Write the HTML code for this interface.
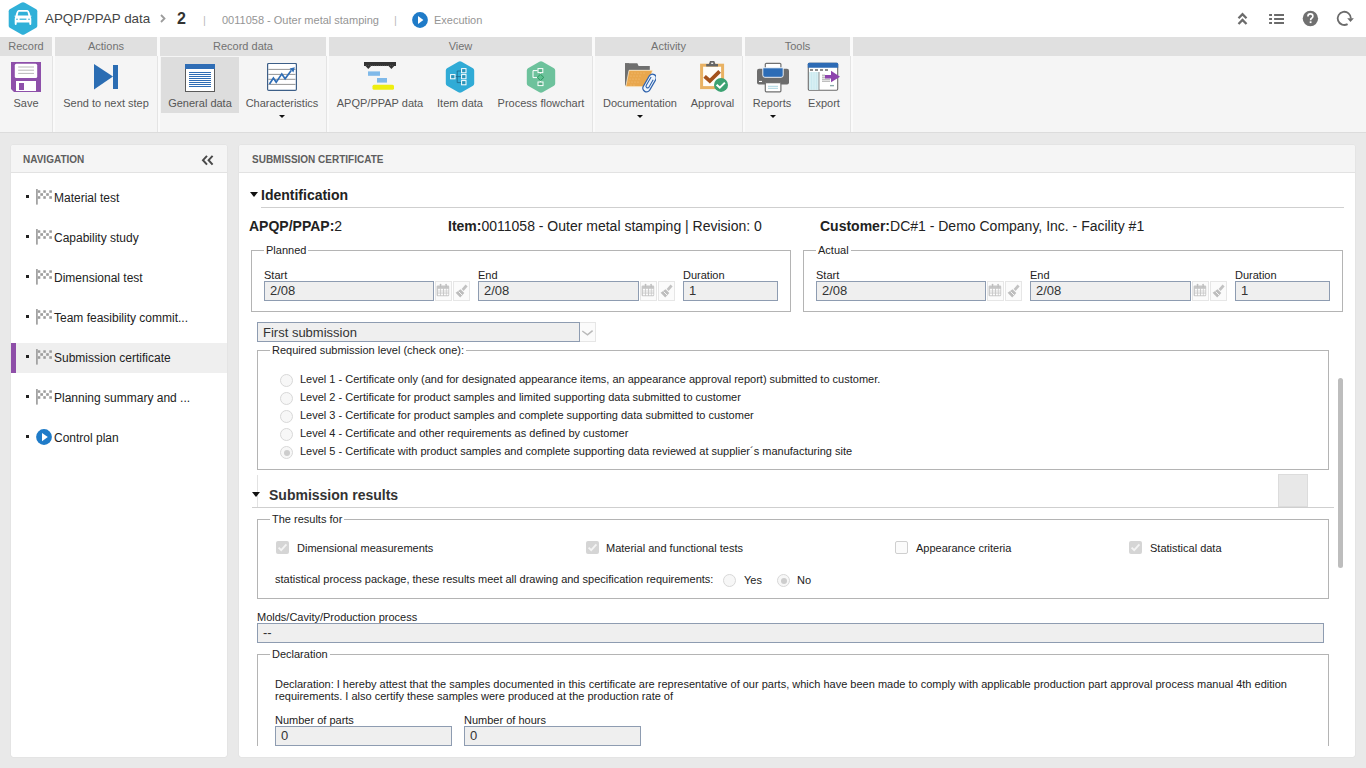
<!DOCTYPE html>
<html><head><meta charset="utf-8">
<style>
*{box-sizing:border-box;margin:0;padding:0}
html,body{width:1366px;height:768px;overflow:hidden}
body{background:#e9e9e9;font-family:"Liberation Sans",sans-serif;position:relative;color:#222}
.a{position:absolute;white-space:nowrap}
#hdr{left:0;top:0;width:1366px;height:37px;background:#fff}
#tb{left:0;top:37px;width:1366px;height:96px;background:#f5f5f5;border-bottom:1px solid #dcdcdc}
.gl{position:absolute;top:0;height:19px;background:#e0e0e0;color:#727272;font-size:11px;line-height:19px;text-align:center}
.gs{position:absolute;top:0;height:95px;width:3px;background:#fafafa}
.gs:after{content:"";position:absolute;left:0;top:19px;width:1px;height:76px;background:#e4e4e4}
.btn{position:absolute;top:19px;height:76px;text-align:center}
.btn .lb{position:absolute;left:0;right:0;top:40px;font-size:11px;line-height:14px;color:#555;text-align:center;white-space:nowrap}
.btn svg{position:absolute;top:6px}
.arr{position:absolute;top:59px;width:0;height:0;border-left:3px solid transparent;border-right:3px solid transparent;border-top:3px solid #222}
.panel{position:absolute;top:145px;height:612px;background:#fff;border-radius:2px;box-shadow:0 0 1px rgba(0,0,0,.2)}
.ph{position:absolute;left:0;top:0;right:0;height:28px;background:#f5f5f5;border-bottom:1px solid #e2e2e2;border-radius:2px 2px 0 0}
.pht{position:absolute;left:12px;top:1px;line-height:28px;font-size:10px;font-weight:bold;color:#5e5e5e}
.ni{position:absolute;left:0;width:216px;height:30px}
.ni .bu{position:absolute;left:15px;top:13px;width:3px;height:3px;background:#222}
.ni .t{position:absolute;left:43px;top:1px;line-height:30px;font-size:12px;color:#222}
.ni svg{position:absolute;left:25px;top:7px}
.ni span svg{position:static}
.fs{position:absolute;border:1px solid #b4b4b4}
.lg{position:absolute;top:-8px;background:#fff;padding:0 2px;font-size:11px;line-height:14px;color:#222}
.fl{position:absolute;font-size:11px;line-height:12px;color:#222}
.in{position:absolute;height:20px;background:#efefef;border:1px solid #8e9cb1;font-size:13px;line-height:18px;padding-left:5px;color:#333}
.ic{position:absolute;width:17px;height:20px;border:1px solid #e6e6e6;background:#fbfbfb}
.rd{position:absolute;width:13px;height:13px;border-radius:50%;border:1px solid #d8d8d8;background:#f7f7f7}
.rd.on:after{content:"";position:absolute;left:2.5px;top:2.5px;width:6px;height:6px;border-radius:50%;background:#cdcdcd}
.rt{position:absolute;font-size:11px;line-height:14px;color:#222}
.cb{position:absolute;width:13px;height:13px;background:#d5d5d5;border-radius:2px}
.cb svg{position:absolute;left:0;top:0}
</style></head><body>

<!-- HEADER -->
<div class="a" id="hdr">
  <div class="a" style="left:45px;top:10px;font-size:13.4px;line-height:18px;color:#444">APQP/PPAP data</div>
  <svg class="a" style="left:160px;top:14px" width="6" height="9" viewBox="0 0 6 9"><path d="M1 1L4.5 4.5L1 8" fill="none" stroke="#9c9c9c" stroke-width="1.8"/></svg>
  <div class="a" style="left:177px;top:9px;font-size:16px;line-height:20px;color:#333;font-weight:bold">2</div>
  <div class="a" style="left:203px;top:12px;font-size:11px;line-height:16px;color:#bbb">|</div>
  <div class="a" style="left:222px;top:12px;font-size:11px;line-height:16px;color:#959595">0011058 - Outer metal stamping</div>
  <div class="a" style="left:394px;top:12px;font-size:11px;line-height:16px;color:#bbb">|</div>
  <div class="a" style="left:434px;top:12px;font-size:11px;line-height:16px;color:#959595">Execution</div>
</div>

<!-- TOOLBAR -->
<div class="a" id="tb">
  <div class="gl" style="left:0;width:52px">Record</div>
  <div class="gl" style="left:55px;width:102px">Actions</div>
  <div class="gl" style="left:160px;width:166px">Record data</div>
  <div class="gl" style="left:329px;width:263px">View</div>
  <div class="gl" style="left:595px;width:147px">Activity</div>
  <div class="gl" style="left:745px;width:105px">Tools</div>
  <div class="gl" style="left:853px;width:513px"></div>
  <div class="gs" style="left:52px"></div>
  <div class="gs" style="left:157px"></div>
  <div class="gs" style="left:326px"></div>
  <div class="gs" style="left:592px"></div>
  <div class="gs" style="left:742px"></div>
  <div class="gs" style="left:850px"></div>
  <div class="btn" style="left:0;width:52px"><div class="lb">Save</div></div>
  <div class="btn" style="left:54px;width:104px"><div class="lb">Send to next step</div></div>
  <div class="btn" style="left:161px;width:78px;background:#dddddd;height:56px;top:20px"><div class="lb" style="top:39px">General data</div></div>
  <div class="btn" style="left:240px;width:84px"><div class="lb">Characteristics</div></div>
  <div class="btn" style="left:331px;width:98px"><div class="lb">APQP/PPAP data</div></div>
  <div class="btn" style="left:431px;width:58px"><div class="lb">Item data</div></div>
  <div class="btn" style="left:491px;width:100px"><div class="lb">Process flowchart</div></div>
  <div class="btn" style="left:597px;width:86px"><div class="lb">Documentation</div></div>
  <div class="btn" style="left:685px;width:55px"><div class="lb">Approval</div></div>
  <div class="btn" style="left:746px;width:52px"><div class="lb">Reports</div></div>
  <div class="btn" style="left:800px;width:48px"><div class="lb">Export</div></div>
</div>


<!-- TOOLBAR ICONS -->
<svg class="a" style="left:11px;top:62px" width="30" height="30" viewBox="0 0 30 30">
 <path d="M0 0H30V30H3L0 27Z" fill="#8e50aa"/>
 <rect x="3.8" y="1.8" width="22.4" height="14.2" rx="1.6" fill="#fff"/>
 <path d="M7.2 5H23M7.2 8.2H23M7.2 11.4H23" stroke="#a6a6a6" stroke-width="0.8"/>
 <rect x="5" y="19" width="20" height="10" fill="#fff"/>
 <rect x="8" y="21" width="5" height="7" fill="#8e50aa"/>
</svg>
<svg class="a" style="left:94px;top:64px" width="25" height="26" viewBox="0 0 25 26">
 <path d="M0 0L19 12.5L0 25.5Z" fill="#2b6db3"/><rect x="19" y="1" width="5" height="24" fill="#2b6db3"/>
</svg>
<svg class="a" style="left:185px;top:64px" width="30" height="28" viewBox="0 0 30 28" shape-rendering="crispEdges">
 <rect x="0.5" y="0.5" width="29" height="26.5" fill="#fff" stroke="#5b5b5b" stroke-width="1"/>
 <rect x="0" y="0" width="30" height="5" fill="#2f6db5"/>
 <path d="M4 8.5H26M4 10.5H26M4 12.5H26M4 14.5H26M4 16.5H26M4 18.5H26M4 20.5H26M4 22.5H26" stroke="#2f6db5" stroke-width="1"/>
</svg>
<svg class="a" style="left:267px;top:63px" width="30" height="28" viewBox="0 0 30 28">
 <rect x="0.6" y="0.4" width="28.8" height="27" rx="1.2" fill="#fff" stroke="#3d5f88" stroke-width="1.2"/>
 <path d="M1.3 6.4H28.5M1.3 11.4H28.5M1.3 16.3H28.5M1.3 21.4H28.5" stroke="#7a7a7a" stroke-width="0.8"/>
 <polyline points="2.5,21 6.4,15 9.2,19.3 14.8,10.9 18.1,15.7 24.2,7.4" fill="none" stroke="#2f6db5" stroke-width="1.7"/>
 <path d="M27.8 4.2L22.6 5.6L26.4 9.6Z" fill="#2f6db5"/>
</svg>
<svg class="a" style="left:363px;top:61px" width="34" height="31" viewBox="0 0 34 31">
 <path d="M1 1H33V5H31.2L28.4 8L25.6 5H8.1L5.3 8L2.5 5H1Z" fill="#333"/>
 <path d="M3 4.6H31" stroke="#666" stroke-width="0.6" stroke-dasharray="1 1"/>
 <rect x="5" y="10.4" width="12" height="4.4" fill="#7fb9e9"/>
 <rect x="14" y="17" width="10" height="4.6" fill="#7fb9e9"/>
 <rect x="9.5" y="23.7" width="21.5" height="5" rx="1.5" fill="#eeee10"/>
</svg>
<svg class="a" style="left:444px;top:60px" width="32" height="34" viewBox="0 0 32 34">
 <path d="M16 1.2Q16.8 1.2 17.6 1.7L29 8.3Q30.2 9 30.2 10.4V23.6Q30.2 25 29 25.7L17.6 32.3Q16 33.2 14.4 32.3L3 25.7Q1.8 25 1.8 23.6V10.4Q1.8 9 3 8.3L14.4 1.7Q15.2 1.2 16 1.2Z" fill="#30abd6"/>
 <path d="M11.2 16.6H13.2M13.2 11H17.2M13.2 11V22.6M13.2 16.6H17.2M13.2 22.6H17.2" stroke="#1f6d8e" stroke-width="0.9" fill="none"/>
 <rect x="6.6" y="14.6" width="4.4" height="4.2" fill="#2a93b8" stroke="#fff" stroke-width="1"/>
 <rect x="17.6" y="8.6" width="4.4" height="4.2" fill="#2a93b8" stroke="#fff" stroke-width="1"/>
 <rect x="17.6" y="14.6" width="4.4" height="4.2" fill="#2a93b8" stroke="#fff" stroke-width="1"/>
 <rect x="17.6" y="20.6" width="4.4" height="4.2" fill="#2a93b8" stroke="#fff" stroke-width="1"/>
</svg>
<svg class="a" style="left:525px;top:60px" width="32" height="34" viewBox="0 0 32 34">
 <path d="M16 1.2Q16.8 1.2 17.6 1.7L29 8.3Q30.2 9 30.2 10.4V23.6Q30.2 25 29 25.7L17.6 32.3Q16 33.2 14.4 32.3L3 25.7Q1.8 25 1.8 23.6V10.4Q1.8 9 3 8.3L14.4 1.7Q15.2 1.2 16 1.2Z" fill="#6dc29c"/>
 <rect x="13" y="8.6" width="4.8" height="4" fill="#5aae88" stroke="#fff" stroke-width="1"/>
 <path d="M12.5 10.6H8V17.6H13" stroke="#fff" stroke-width="1" fill="none"/>
 <path d="M15.5 12.6V14.2M15.5 20.6V22" stroke="#fff" stroke-width="1"/>
 <path d="M15.5 14.2L18.8 17.4L15.5 20.6L12.2 17.4Z" fill="#5cc08f" stroke="#2e9560" stroke-width="1"/>
 <rect x="13" y="22" width="5" height="3.6" fill="#5aae88" stroke="#fff" stroke-width="1"/>
</svg>
<svg class="a" style="left:624px;top:62px" width="32" height="31" viewBox="0 0 32 31">
 <path d="M1 1.2H13.3L14.6 4.1H25.8V8.3H1Z" fill="#6f6f6f"/>
 <path d="M1 1.2H5V24L1 23.6Z" fill="#6f6f6f"/>
 <path d="M5 8.3H28.6L23.7 24.7H1.8Z" fill="#e9a74d" stroke="#fdf3dc" stroke-width="0.7"/>
 <g fill="#f4c27c"><circle cx="8" cy="11" r="0.6"/><circle cx="11" cy="11" r="0.6"/><circle cx="14" cy="11" r="0.6"/><circle cx="17" cy="11" r="0.6"/><circle cx="20" cy="11" r="0.6"/><circle cx="7" cy="14" r="0.6"/><circle cx="10" cy="14" r="0.6"/><circle cx="13" cy="14" r="0.6"/><circle cx="16" cy="14" r="0.6"/><circle cx="6" cy="17" r="0.6"/><circle cx="9" cy="17" r="0.6"/><circle cx="12" cy="17" r="0.6"/><circle cx="15" cy="17" r="0.6"/><circle cx="5" cy="20" r="0.6"/><circle cx="8" cy="20" r="0.6"/><circle cx="11" cy="20" r="0.6"/><circle cx="14" cy="20" r="0.6"/><circle cx="7" cy="23" r="0.6"/><circle cx="10" cy="23" r="0.6"/></g>
 <g transform="rotate(30 25.5 21)"><rect x="21.8" y="11.4" width="7.4" height="19.2" rx="3.7" fill="#eef5fc" stroke="#2f62ac" stroke-width="1.3"/><path d="M23.9 15V24.6Q23.9 26.4 25.5 26.4Q27.1 26.4 27.1 24.6V16.4" fill="none" stroke="#2f62ac" stroke-width="1.1"/></g>
</svg>
<svg class="a" style="left:699px;top:60px" width="31" height="33" viewBox="0 0 31 33">
 <rect x="2.6" y="5.2" width="21" height="22.4" fill="#fffdf8" stroke="#e9b263" stroke-width="3"/>
 <path d="M11 1H15.3L16.4 4H19V6.6H7.2V4H9.9Z" fill="#666"/>
 <rect x="12.2" y="2.6" width="2" height="1.4" fill="#eee"/>
 <polyline points="5.6,16.4 10.8,21 20.6,11.4" fill="none" stroke="#a4521b" stroke-width="3.8"/>
 <circle cx="22" cy="24.9" r="7" fill="#3ba272"/>
 <polyline points="17.6,24.8 20.8,27.6 25.9,22.6" fill="none" stroke="#fff" stroke-width="2"/>
</svg>
<svg class="a" style="left:756px;top:62px" width="34" height="31" viewBox="0 0 34 31">
 <rect x="9.3" y="1.3" width="15.6" height="7" rx="1" fill="#fff" stroke="#707070" stroke-width="1.2"/>
 <rect x="1" y="6.8" width="32" height="15.8" rx="2" fill="#6d6d6d"/>
 <path d="M6.8 5.8H27.2V13.2Q27.2 15.3 25.1 15.3H8.9Q6.8 15.3 6.8 13.2Z" fill="#2c6cb6" stroke="#fff" stroke-width="0.9"/>
 <rect x="3" y="18.9" width="3" height="1.1" fill="#fff"/>
 <rect x="9.3" y="20.6" width="15.6" height="9.2" rx="1" fill="#fff" stroke="#707070" stroke-width="1.2"/>
 <path d="M12 24.3H22M12 26.3H22" stroke="#9fd0dc" stroke-width="0.9"/>
</svg>
<svg class="a" style="left:807px;top:62px" width="34" height="30" viewBox="0 0 34 30">
 <rect x="1.3" y="1.3" width="29.4" height="27" rx="1.2" fill="#fff" stroke="#6b6b6b" stroke-width="1.1"/>
 <path d="M0.8 5.8V2.2Q0.8 0.8 2.2 0.8H29.8Q31.2 0.8 31.2 2.2V5.8Z" fill="#2d6bb5"/>
 <path d="M3 8H6M8 8H11M13 8H16M18 8H21" stroke="#6a6a6a" stroke-width="1.5"/>
 <rect x="2" y="10" width="10" height="17.8" fill="#d7eff3"/>
 <path d="M4.5 10V27.8M7 10V27.8M9.5 10V27.8" stroke="#bfe2ea" stroke-width="0.5"/>
 <path d="M12 10V28" stroke="#777" stroke-width="0.8"/>
 <path d="M15 13.2H18M15 15.2H18M15 17.2H23M15 19.2H23M23 23.6H26.8" stroke="#8a8a8a" stroke-width="0.8"/>
 <path d="M23 23.6H27" stroke="#8aa" stroke-width="1.3"/>
 <path d="M18 13H24V8.8L33 14.8L24 20.2V16.5H18Z" fill="#8e44ad"/>
</svg>
<div class="a" style="left:279px;top:115px;width:0;height:0;border-left:3px solid transparent;border-right:3px solid transparent;border-top:3px solid #111"></div>
<div class="a" style="left:637px;top:115px;width:0;height:0;border-left:3px solid transparent;border-right:3px solid transparent;border-top:3px solid #111"></div>
<div class="a" style="left:770px;top:115px;width:0;height:0;border-left:3px solid transparent;border-right:3px solid transparent;border-top:3px solid #111"></div>

<!-- HEADER ICONS -->
<svg class="a" style="left:8px;top:2px" width="30" height="33" viewBox="0 0 30 33">
 <path d="M15 0.2Q15.9 0.2 16.8 0.7L28.2 7.3Q29.3 8 29.3 9.3V23.7Q29.3 25 28.2 25.7L16.8 32.3Q15 33.3 13.2 32.3L1.8 25.7Q0.7 25 0.7 23.7V9.3Q0.7 8 1.8 7.3L13.2 0.7Q14.1 0.2 15 0.2Z" fill="#30b0d8"/>
 <path d="M8.2 11.3Q9 8.2 10.5 8H19.5Q21 8.2 21.8 11.3L22.5 13.8H23.6L23.4 14.6L22.6 14.8Q23.3 15.6 23.3 17V21.5Q23.3 23 22.3 23Q21.3 23 21.3 21.5V20.5H8.7V21.5Q8.7 23 7.7 23Q6.7 23 6.7 21.5V17Q6.7 15.6 7.4 14.8L6.6 14.6L6.4 13.8H7.5Z" fill="#fff"/>
 <path d="M9.6 13.6L10.6 9.8H19.4L20.4 13.6Z" fill="#30b0d8"/>
 <rect x="11.6" y="16.6" width="6.8" height="1.2" fill="#30b0d8"/>
 <circle cx="9" cy="17.2" r="0.8" fill="#30b0d8"/><circle cx="21" cy="17.2" r="0.8" fill="#30b0d8"/>
</svg>
<svg class="a" style="left:412px;top:12px" width="16" height="16" viewBox="0 0 16 16"><circle cx="8" cy="8" r="7.9" fill="#1f7bc8"/><path d="M6 4.1L11.4 8.1L6 12.1Z" fill="#fff"/></svg>
<svg class="a" style="left:1236px;top:12px" width="13" height="14" viewBox="0 0 13 14">
 <path d="M2.5 6.2L6.5 2.2L10.5 6.2M2.5 12L6.5 8L10.5 12" fill="none" stroke="#6b6b6b" stroke-width="2.3"/>
</svg>
<svg class="a" style="left:1268px;top:13px" width="17" height="12" viewBox="0 0 17 12">
 <path d="M1.1 2H4M1.1 6H4M1.1 10H4M6.1 2H16M6.1 6H16M6.1 10H16" stroke="#6b6b6b" stroke-width="1.8"/>
</svg>
<svg class="a" style="left:1302px;top:10px" width="17" height="17" viewBox="0 0 17 17">
 <circle cx="8.4" cy="8.5" r="7.7" fill="#707070"/>
 <path d="M5.9 6.4Q5.9 3.9 8.4 3.9Q10.9 3.9 10.9 6.2Q10.9 7.4 9.6 8.2Q8.6 8.8 8.6 10.2" fill="none" stroke="#fff" stroke-width="1.6"/>
 <rect x="7.7" y="11.3" width="1.8" height="1.8" fill="#fff"/>
</svg>
<svg class="a" style="left:1335px;top:10px" width="20" height="17" viewBox="0 0 20 17">
 <path d="M15.9 8.4A6.6 6.6 0 1 0 12.6 14.1" fill="none" stroke="#6b6b6b" stroke-width="1.8"/>
 <path d="M12.2 8.2L18.9 8.2L15.5 11.9Z" fill="#6b6b6b"/>
</svg>

<!-- NAV PANEL -->
<div class="panel" style="left:11px;width:216px">
  <div class="ph"><div class="pht">NAVIGATION</div><svg class="a" style="left:190px;top:10px" width="13" height="11" viewBox="0 0 13 11"><path d="M6 0.8L2 5.2L6 9.6M11.6 0.8L7.6 5.2L11.6 9.6" fill="none" stroke="#4a4a4a" stroke-width="2"/></svg></div>
  <div class="ni" style="top:37px"><div class="bu"></div><svg width="17" height="16" viewBox="0 0 17 16"><rect x="0" y="0" width="1.8" height="15.6" fill="#a3a3a3"/><g fill="#9c9c9c"><rect x="1.8" y="1.3" width="2.5" height="2.5"/><rect x="7.3" y="1.3" width="2.5" height="2.5"/><rect x="13.3" y="1.3" width="2.6" height="2.5"/><rect x="4.3" y="4.2" width="2.7" height="2.6"/><rect x="10.2" y="4.2" width="2.6" height="2.6"/><rect x="1.8" y="7.2" width="2.5" height="2.6"/><rect x="7.3" y="7.2" width="2.5" height="2.6"/><rect x="13.3" y="7.2" width="2.6" height="2.6"/></g></svg><div class="t">Material test</div></div>
  <div class="ni" style="top:77px"><div class="bu"></div><svg width="17" height="16" viewBox="0 0 17 16"><rect x="0" y="0" width="1.8" height="15.6" fill="#a3a3a3"/><g fill="#9c9c9c"><rect x="1.8" y="1.3" width="2.5" height="2.5"/><rect x="7.3" y="1.3" width="2.5" height="2.5"/><rect x="13.3" y="1.3" width="2.6" height="2.5"/><rect x="4.3" y="4.2" width="2.7" height="2.6"/><rect x="10.2" y="4.2" width="2.6" height="2.6"/><rect x="1.8" y="7.2" width="2.5" height="2.6"/><rect x="7.3" y="7.2" width="2.5" height="2.6"/><rect x="13.3" y="7.2" width="2.6" height="2.6"/></g></svg><div class="t">Capability study</div></div>
  <div class="ni" style="top:117px"><div class="bu"></div><svg width="17" height="16" viewBox="0 0 17 16"><rect x="0" y="0" width="1.8" height="15.6" fill="#a3a3a3"/><g fill="#9c9c9c"><rect x="1.8" y="1.3" width="2.5" height="2.5"/><rect x="7.3" y="1.3" width="2.5" height="2.5"/><rect x="13.3" y="1.3" width="2.6" height="2.5"/><rect x="4.3" y="4.2" width="2.7" height="2.6"/><rect x="10.2" y="4.2" width="2.6" height="2.6"/><rect x="1.8" y="7.2" width="2.5" height="2.6"/><rect x="7.3" y="7.2" width="2.5" height="2.6"/><rect x="13.3" y="7.2" width="2.6" height="2.6"/></g></svg><div class="t">Dimensional test</div></div>
  <div class="ni" style="top:157px"><div class="bu"></div><svg width="17" height="16" viewBox="0 0 17 16"><rect x="0" y="0" width="1.8" height="15.6" fill="#a3a3a3"/><g fill="#9c9c9c"><rect x="1.8" y="1.3" width="2.5" height="2.5"/><rect x="7.3" y="1.3" width="2.5" height="2.5"/><rect x="13.3" y="1.3" width="2.6" height="2.5"/><rect x="4.3" y="4.2" width="2.7" height="2.6"/><rect x="10.2" y="4.2" width="2.6" height="2.6"/><rect x="1.8" y="7.2" width="2.5" height="2.6"/><rect x="7.3" y="7.2" width="2.5" height="2.6"/><rect x="13.3" y="7.2" width="2.6" height="2.6"/></g></svg><div class="t">Team feasibility commit...</div></div>
  <div class="ni" style="top:198px;background:#efefef"><div class="a" style="left:0;top:0;width:5px;height:30px;background:#8e4ea8"></div><div class="bu" style="top:12px"></div><svg width="17" height="16" viewBox="0 0 17 16" style="top:6px"><rect x="0" y="0" width="1.8" height="15.6" fill="#a3a3a3"/><g fill="#9c9c9c"><rect x="1.8" y="1.3" width="2.5" height="2.5"/><rect x="7.3" y="1.3" width="2.5" height="2.5"/><rect x="13.3" y="1.3" width="2.6" height="2.5"/><rect x="4.3" y="4.2" width="2.7" height="2.6"/><rect x="10.2" y="4.2" width="2.6" height="2.6"/><rect x="1.8" y="7.2" width="2.5" height="2.6"/><rect x="7.3" y="7.2" width="2.5" height="2.6"/><rect x="13.3" y="7.2" width="2.6" height="2.6"/></g></svg><div class="t" style="top:0">Submission certificate</div></div>
  <div class="ni" style="top:237px"><div class="bu"></div><svg width="17" height="16" viewBox="0 0 17 16"><rect x="0" y="0" width="1.8" height="15.6" fill="#a3a3a3"/><g fill="#9c9c9c"><rect x="1.8" y="1.3" width="2.5" height="2.5"/><rect x="7.3" y="1.3" width="2.5" height="2.5"/><rect x="13.3" y="1.3" width="2.6" height="2.5"/><rect x="4.3" y="4.2" width="2.7" height="2.6"/><rect x="10.2" y="4.2" width="2.6" height="2.6"/><rect x="1.8" y="7.2" width="2.5" height="2.6"/><rect x="7.3" y="7.2" width="2.5" height="2.6"/><rect x="13.3" y="7.2" width="2.6" height="2.6"/></g></svg><div class="t">Planning summary and ...</div></div>
  <div class="ni" style="top:277px"><div class="bu"></div><span style="position:absolute;left:25px;top:7px;width:17px;height:17px"><svg width="17" height="17" viewBox="0 0 17 17"><circle cx="8" cy="8" r="7.9" fill="#1f7bc8"/><path d="M6 4L11.8 8.1L6 12.2Z" fill="#fff"/></svg></span><div class="t">Control plan</div></div>
</div>

<!-- MAIN PANEL -->
<div class="panel" style="left:239px;width:1116px">
  <div class="ph"><div class="pht" style="left:13px">SUBMISSION CERTIFICATE</div></div>
</div>

<!-- CONTENT (page coords) -->
<div class="a" style="left:239px;top:173px;width:1116px;height:573px;overflow:hidden"><div class="a" style="left:-239px;top:-173px;width:1366px;height:768px">
<div class="a" style="left:250px;top:192px;width:0;height:0;border-left:4px solid transparent;border-right:4px solid transparent;border-top:5px solid #111"></div>
<div class="a" style="left:261px;top:186px;font-size:14px;line-height:18px;font-weight:bold;color:#222">Identification</div>
<div class="a" style="left:261px;top:207px;width:1083px;height:1px;background:#cfcfcf"></div>

<div class="a" style="left:249px;top:218px;font-size:14px;line-height:17px;color:#222"><b>APQP/PPAP:</b>2</div>
<div class="a" style="left:448px;top:218px;font-size:14px;line-height:17px;color:#222"><b>Item:</b>0011058 - Outer metal stamping | Revision: 0</div>
<div class="a" style="left:820px;top:218px;font-size:14px;line-height:17px;color:#222"><b>Customer:</b>DC#1 - Demo Company, Inc. - Facility #1</div>

<!-- Planned -->
<div class="fs" style="left:251px;top:250px;width:540px;height:62px"><div class="lg" style="left:12px">Planned</div></div>
<div class="fl" style="left:264px;top:269px">Start</div>
<div class="in" style="left:264px;top:281px;width:170px">2/08</div>
<div class="ic" style="left:435px;top:281px"><svg width="16" height="18" viewBox="0 0 16 18" style="position:absolute;left:-1px;top:-1px"><rect x="1.6" y="4.6" width="12.6" height="10.6" rx="1.2" fill="#c6c6c6"/><g fill="#fbfbfb"><rect x="2.9" y="7.8" width="2.1" height="1.9"/><rect x="5.8" y="7.8" width="2.2" height="1.9"/><rect x="8.9" y="7.8" width="2" height="1.9"/><rect x="11.6" y="7.8" width="1.8" height="1.9"/><rect x="2.9" y="10.3" width="2.1" height="1.3"/><rect x="5.8" y="10.3" width="2.2" height="1.3"/><rect x="8.9" y="10.3" width="2" height="1.3"/><rect x="11.6" y="10.3" width="1.8" height="1.3"/><rect x="2.9" y="12.5" width="2.1" height="1.8"/><rect x="5.8" y="12.5" width="2.2" height="1.8"/><rect x="8.9" y="12.5" width="2" height="1.8"/><rect x="11.6" y="12.5" width="1.8" height="1.8"/></g><rect x="4.9" y="2.7" width="1.3" height="3.6" rx="0.6" fill="#bdbdbd"/><rect x="10.5" y="2.7" width="1.3" height="3.6" rx="0.6" fill="#bdbdbd"/></svg></div><div class="ic" style="left:453px;top:281px"><svg width="17" height="20" viewBox="0 0 17 20" style="position:absolute;left:-1px;top:-1px"><path d="M12.6 3.6L14.6 5.6L10.6 10L8.6 8Z" fill="#c2c2c2"/><path d="M7.6 8.2L11.3 11.9L7.2 16.4L2.6 11.8Z" fill="#bdbdbd"/><path d="M5.6 10.6L9.2 14.2" stroke="#f6f6f6" stroke-width="1"/></svg></div>
<div class="fl" style="left:478px;top:269px">End</div>
<div class="in" style="left:478px;top:281px;width:161px">2/08</div>
<div class="ic" style="left:640px;top:281px"><svg width="16" height="18" viewBox="0 0 16 18" style="position:absolute;left:-1px;top:-1px"><rect x="1.6" y="4.6" width="12.6" height="10.6" rx="1.2" fill="#c6c6c6"/><g fill="#fbfbfb"><rect x="2.9" y="7.8" width="2.1" height="1.9"/><rect x="5.8" y="7.8" width="2.2" height="1.9"/><rect x="8.9" y="7.8" width="2" height="1.9"/><rect x="11.6" y="7.8" width="1.8" height="1.9"/><rect x="2.9" y="10.3" width="2.1" height="1.3"/><rect x="5.8" y="10.3" width="2.2" height="1.3"/><rect x="8.9" y="10.3" width="2" height="1.3"/><rect x="11.6" y="10.3" width="1.8" height="1.3"/><rect x="2.9" y="12.5" width="2.1" height="1.8"/><rect x="5.8" y="12.5" width="2.2" height="1.8"/><rect x="8.9" y="12.5" width="2" height="1.8"/><rect x="11.6" y="12.5" width="1.8" height="1.8"/></g><rect x="4.9" y="2.7" width="1.3" height="3.6" rx="0.6" fill="#bdbdbd"/><rect x="10.5" y="2.7" width="1.3" height="3.6" rx="0.6" fill="#bdbdbd"/></svg></div><div class="ic" style="left:658px;top:281px"><svg width="17" height="20" viewBox="0 0 17 20" style="position:absolute;left:-1px;top:-1px"><path d="M12.6 3.6L14.6 5.6L10.6 10L8.6 8Z" fill="#c2c2c2"/><path d="M7.6 8.2L11.3 11.9L7.2 16.4L2.6 11.8Z" fill="#bdbdbd"/><path d="M5.6 10.6L9.2 14.2" stroke="#f6f6f6" stroke-width="1"/></svg></div>
<div class="fl" style="left:683px;top:269px">Duration</div>
<div class="in" style="left:683px;top:281px;width:95px">1</div>

<!-- Actual -->
<div class="fs" style="left:803px;top:250px;width:540px;height:62px"><div class="lg" style="left:12px">Actual</div></div>
<div class="fl" style="left:816px;top:269px">Start</div>
<div class="in" style="left:816px;top:281px;width:170px">2/08</div>
<div class="ic" style="left:987px;top:281px"><svg width="16" height="18" viewBox="0 0 16 18" style="position:absolute;left:-1px;top:-1px"><rect x="1.6" y="4.6" width="12.6" height="10.6" rx="1.2" fill="#c6c6c6"/><g fill="#fbfbfb"><rect x="2.9" y="7.8" width="2.1" height="1.9"/><rect x="5.8" y="7.8" width="2.2" height="1.9"/><rect x="8.9" y="7.8" width="2" height="1.9"/><rect x="11.6" y="7.8" width="1.8" height="1.9"/><rect x="2.9" y="10.3" width="2.1" height="1.3"/><rect x="5.8" y="10.3" width="2.2" height="1.3"/><rect x="8.9" y="10.3" width="2" height="1.3"/><rect x="11.6" y="10.3" width="1.8" height="1.3"/><rect x="2.9" y="12.5" width="2.1" height="1.8"/><rect x="5.8" y="12.5" width="2.2" height="1.8"/><rect x="8.9" y="12.5" width="2" height="1.8"/><rect x="11.6" y="12.5" width="1.8" height="1.8"/></g><rect x="4.9" y="2.7" width="1.3" height="3.6" rx="0.6" fill="#bdbdbd"/><rect x="10.5" y="2.7" width="1.3" height="3.6" rx="0.6" fill="#bdbdbd"/></svg></div><div class="ic" style="left:1005px;top:281px"><svg width="17" height="20" viewBox="0 0 17 20" style="position:absolute;left:-1px;top:-1px"><path d="M12.6 3.6L14.6 5.6L10.6 10L8.6 8Z" fill="#c2c2c2"/><path d="M7.6 8.2L11.3 11.9L7.2 16.4L2.6 11.8Z" fill="#bdbdbd"/><path d="M5.6 10.6L9.2 14.2" stroke="#f6f6f6" stroke-width="1"/></svg></div>
<div class="fl" style="left:1030px;top:269px">End</div>
<div class="in" style="left:1030px;top:281px;width:161px">2/08</div>
<div class="ic" style="left:1192px;top:281px"><svg width="16" height="18" viewBox="0 0 16 18" style="position:absolute;left:-1px;top:-1px"><rect x="1.6" y="4.6" width="12.6" height="10.6" rx="1.2" fill="#c6c6c6"/><g fill="#fbfbfb"><rect x="2.9" y="7.8" width="2.1" height="1.9"/><rect x="5.8" y="7.8" width="2.2" height="1.9"/><rect x="8.9" y="7.8" width="2" height="1.9"/><rect x="11.6" y="7.8" width="1.8" height="1.9"/><rect x="2.9" y="10.3" width="2.1" height="1.3"/><rect x="5.8" y="10.3" width="2.2" height="1.3"/><rect x="8.9" y="10.3" width="2" height="1.3"/><rect x="11.6" y="10.3" width="1.8" height="1.3"/><rect x="2.9" y="12.5" width="2.1" height="1.8"/><rect x="5.8" y="12.5" width="2.2" height="1.8"/><rect x="8.9" y="12.5" width="2" height="1.8"/><rect x="11.6" y="12.5" width="1.8" height="1.8"/></g><rect x="4.9" y="2.7" width="1.3" height="3.6" rx="0.6" fill="#bdbdbd"/><rect x="10.5" y="2.7" width="1.3" height="3.6" rx="0.6" fill="#bdbdbd"/></svg></div><div class="ic" style="left:1210px;top:281px"><svg width="17" height="20" viewBox="0 0 17 20" style="position:absolute;left:-1px;top:-1px"><path d="M12.6 3.6L14.6 5.6L10.6 10L8.6 8Z" fill="#c2c2c2"/><path d="M7.6 8.2L11.3 11.9L7.2 16.4L2.6 11.8Z" fill="#bdbdbd"/><path d="M5.6 10.6L9.2 14.2" stroke="#f6f6f6" stroke-width="1"/></svg></div>
<div class="fl" style="left:1235px;top:269px">Duration</div>
<div class="in" style="left:1235px;top:281px;width:95px">1</div>

<!-- select -->
<div class="in" style="left:257px;top:322px;width:323px;height:20px;line-height:19px">First submission</div>
<div class="ic" style="left:580px;top:322px;width:16px;height:20px;border-left:none"><svg width="16" height="20" viewBox="0 0 16 20" style="position:absolute;left:0;top:-1px"><polyline points="2.3,9 7.5,12.8 12.6,8.6" fill="none" stroke="#b9b9b9" stroke-width="1.5"/></svg></div>

<!-- levels -->
<div class="fs" style="left:257px;top:350px;width:1072px;height:120px"><div class="lg" style="left:12px">Required submission level (check one):</div></div>
<div class="rd" style="left:280px;top:374px"></div><div class="rt" style="left:300px;top:372px">Level 1 - Certificate only (and for designated appearance items, an appearance approval report) submitted to customer.</div>
<div class="rd" style="left:280px;top:392px"></div><div class="rt" style="left:300px;top:390px">Level 2 - Certificate for product samples and limited supporting data submitted to customer</div>
<div class="rd" style="left:280px;top:410px"></div><div class="rt" style="left:300px;top:408px">Level 3 - Certificate for product samples and complete supporting data submitted to customer</div>
<div class="rd" style="left:280px;top:428px"></div><div class="rt" style="left:300px;top:426px">Level 4 - Certificate and other requirements as defined by customer</div>
<div class="rd on" style="left:280px;top:446px"></div><div class="rt" style="left:300px;top:444px">Level 5 - Certificate with product samples and complete supporting data reviewed at supplier&#180;s manufacturing site</div>

<!-- Submission results -->
<div class="a" style="left:257px;top:475px;width:1px;height:32px;background:#e2e2e2"></div>
<div class="a" style="left:252px;top:492px;width:0;height:0;border-left:4px solid transparent;border-right:4px solid transparent;border-top:5px solid #111"></div>
<div class="a" style="left:269px;top:486px;font-size:14px;line-height:18px;font-weight:bold;color:#333">Submission results</div>
<div class="a" style="left:1278px;top:474px;width:30px;height:33px;background:#e8e8e8;border:1px solid #dcdcdc"></div>
<div class="a" style="left:252px;top:507px;width:1082px;height:1px;background:#cfcfcf"></div>

<div class="fs" style="left:257px;top:519px;width:1072px;height:80px"><div class="lg" style="left:12px">The results for</div></div>
<div class="cb" style="left:276px;top:541px"><svg width="13" height="13" viewBox="0 0 13 13"><path d="M2.6 6.6L5.2 9.2L10.4 3.4" fill="none" stroke="#f4f4f4" stroke-width="1.8"/></svg></div><div class="rt" style="left:297px;top:541px">Dimensional measurements</div>
<div class="cb" style="left:586px;top:541px"><svg width="13" height="13" viewBox="0 0 13 13"><path d="M2.6 6.6L5.2 9.2L10.4 3.4" fill="none" stroke="#f4f4f4" stroke-width="1.8"/></svg></div><div class="rt" style="left:606px;top:541px">Material and functional tests</div>
<div class="cb" style="left:895px;top:541px;background:#fbfbfb;border:1px solid #cfcfcf"></div><div class="rt" style="left:916px;top:541px">Appearance criteria</div>
<div class="cb" style="left:1129px;top:541px"><svg width="13" height="13" viewBox="0 0 13 13"><path d="M2.6 6.6L5.2 9.2L10.4 3.4" fill="none" stroke="#f4f4f4" stroke-width="1.8"/></svg></div><div class="rt" style="left:1150px;top:541px">Statistical data</div>
<div class="rt" style="left:275px;top:572px">statistical process package, these results meet all drawing and specification requirements:</div>
<div class="rd" style="left:723px;top:574px"></div><div class="rt" style="left:744px;top:573px">Yes</div>
<div class="rd on" style="left:777px;top:574px"></div><div class="rt" style="left:797px;top:573px">No</div>

<div class="fl" style="left:257px;top:611px">Molds/Cavity/Production process</div>
<div class="in" style="left:257px;top:623px;width:1067px;height:20px;line-height:18px">--</div>

<div class="fs" style="left:257px;top:654px;width:1072px;height:120px;border-bottom:none"><div class="lg" style="left:12px">Declaration</div></div>
<div class="rt" style="left:275px;top:678px;line-height:12px;white-space:normal;width:1040px">Declaration: I hereby attest that the samples documented in this certificate are representative of our parts, which have been made to comply with applicable production part approval process manual 4th edition requirements. I also certify these samples were produced at the production rate of</div>
<div class="fl" style="left:275px;top:714px">Number of parts</div>
<div class="in" style="left:275px;top:726px;width:177px">0</div>
<div class="fl" style="left:464px;top:714px">Number of hours</div>
<div class="in" style="left:464px;top:726px;width:177px">0</div>

</div></div>
<!-- scrollbar -->
<div class="a" style="left:1338px;top:378px;width:5px;height:190px;background:#bdbdbd;border-radius:3px"></div>

</body></html>
